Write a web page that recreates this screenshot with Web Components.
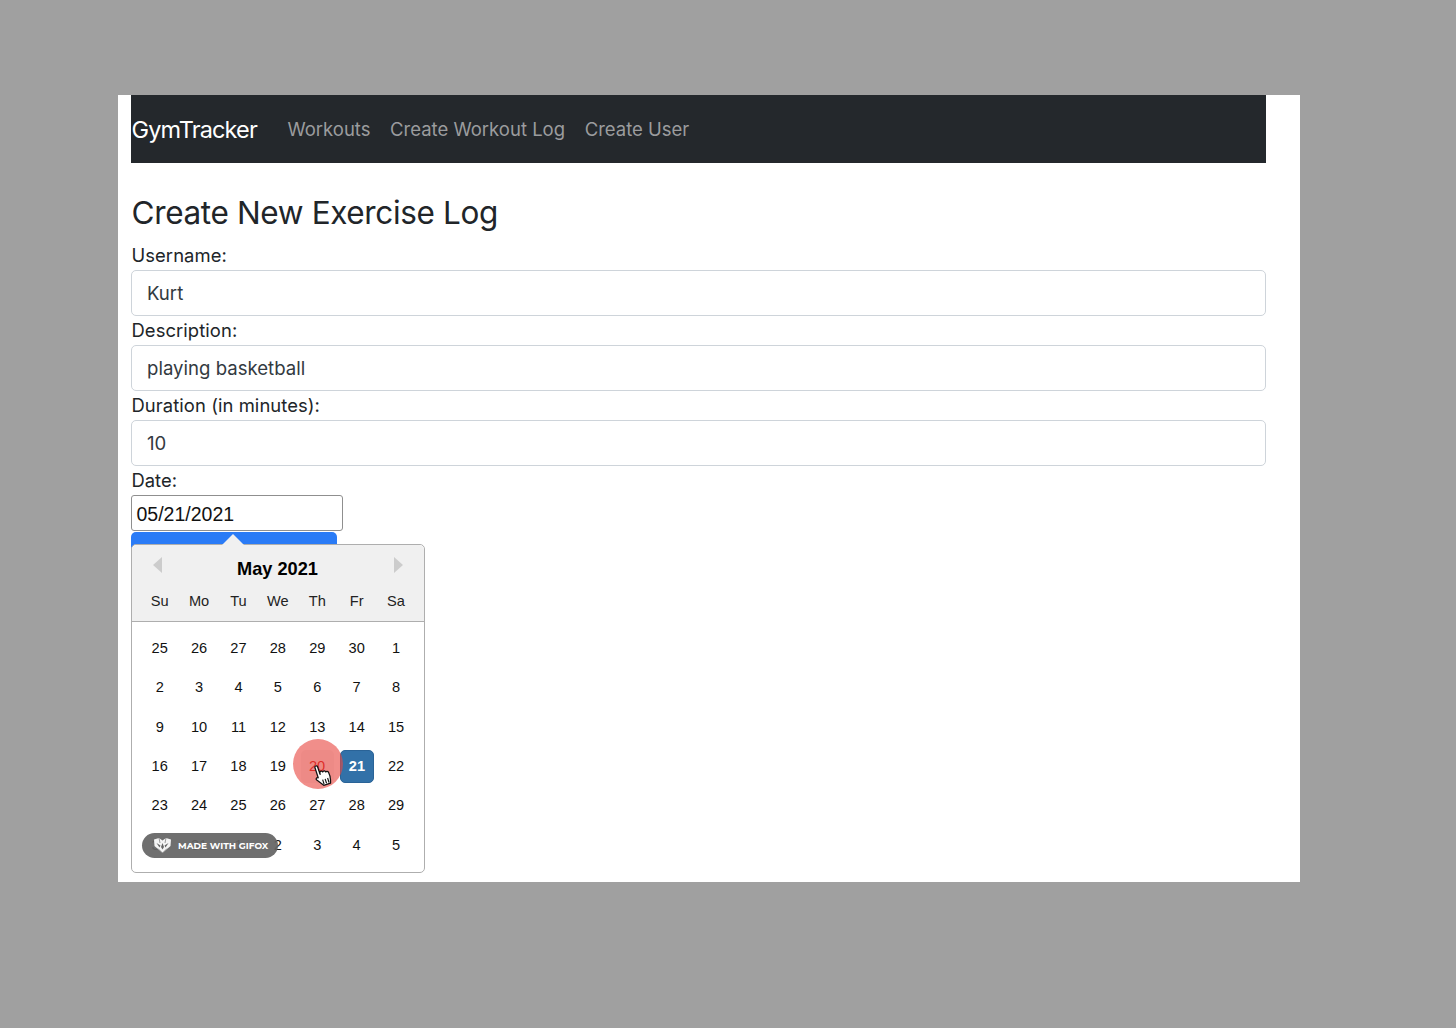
<!DOCTYPE html>
<html lang="en">
<head>
<meta charset="utf-8">
<title>GymTracker</title>
<style>
  html,body{margin:0;padding:0;height:100%;}
  body{background:#a0a0a0;font-family:Inter,"Liberation Sans",sans-serif;}
</style>
</head>
<body>
<gym-app>
  <gym-nav slot="nav" brand="GymTracker" links="Workouts|Create Workout Log|Create User"></gym-nav>
  <gym-field label="Username:" value="Kurt"></gym-field>
  <gym-field label="Description:" value="playing basketball"></gym-field>
  <gym-field label="Duration (in minutes):" value="10"></gym-field>
  <gym-date label="Date:" value="05/21/2021"></gym-date>
</gym-app>
<script>
class GymApp extends HTMLElement {
  constructor() {
    super();
    this.attachShadow({mode:'open'}).innerHTML = `
      <style>
        :host{display:block;padding:95px 156px 0 118px;}
        #panel{background:#fff;height:787px;padding:0 34px 0 13px;box-sizing:border-box;}
        h1{margin:0;padding:30.5px 0 0 .5px;height:78px;box-sizing:border-box;font:400 31.5px/38px Inter,"Liberation Sans",sans-serif;color:#212529;letter-spacing:-.36px;}
        #form{display:flex;flex-direction:column;}
      </style>
      <div id="panel">
        <slot name="nav"></slot>
        <h1>Create New Exercise Log</h1>
        <div id="form"><slot></slot></div>
      </div>`;
  }
}
customElements.define('gym-app', GymApp);

class GymNav extends HTMLElement {
  connectedCallback() {
    const links = this.getAttribute('links').split('|').map(l => `<a>${l}</a>`).join('');
    this.attachShadow({mode:'open'}).innerHTML = `
      <style>
        :host{display:flex;align-items:center;height:68px;padding-left:.5px;background:#24282c;font-family:Inter,"Liberation Sans",sans-serif;}
        b{font-weight:400;font-size:23.5px;color:#fff;margin-right:30.5px;letter-spacing:-.85px;position:relative;}
        nav{display:flex;gap:19.6px;position:relative;}
        a{font-size:18.5px;color:#9b9c9e;}
      </style>
      <b>${this.getAttribute('brand')}</b><nav>${links}</nav>`;
  }
}
customElements.define('gym-nav', GymNav);

class GymField extends HTMLElement {
  connectedCallback() {
    this.attachShadow({mode:'open'}).innerHTML = `
      <style>
        :host{display:block;height:75px;font-family:Inter,"Liberation Sans",sans-serif;color:#212529;}
        label{display:block;height:29px;padding-left:.5px;font-size:18.4px;line-height:29px;letter-spacing:.08px;}
        div{height:46px;box-sizing:border-box;border:1px solid #ced4da;border-radius:5px;padding:0 15px;font-size:18.6px;line-height:44px;color:#333a41;background:#fff;}
      </style>
      <label>${this.getAttribute('label')}</label><div>${this.getAttribute('value')}</div>`;
  }
}
customElements.define('gym-field', GymField);

class GymCalendar extends HTMLElement {
  connectedCallback() {
    const heads = ['Su','Mo','Tu','We','Th','Fr','Sa'].map(d => `<span>${d}</span>`).join('');
    const days = [25,26,27,28,29,30,1, 2,3,4,5,6,7,8, 9,10,11,12,13,14,15, 16,17,18,19,20,21,22, 23,24,25,26,27,28,29, 30,31,1,2,3,4,5];
    const cells = days.map((d, i) => {
      const cls = i === 26 ? 'sel' : i === 25 ? 'hover' : '';
      return `<span class="${cls}">${d}</span>`;
    }).join('');
    this.attachShadow({mode:'open'}).innerHTML = `
      <style>
        :host{display:block;position:absolute;left:0;top:78px;width:294px;height:329px;box-sizing:border-box;background:#fff;border:1px solid #aeaeae;border-radius:5px;font-family:"Liberation Sans",Arial,sans-serif;color:#000;}
        #tip{position:absolute;left:90px;top:-11px;width:0;height:0;border:11px solid transparent;border-top:0;border-bottom-color:#f0f0f0;}
        header{height:76px;background:#f0f0f0;border-bottom:1px solid #aeaeae;border-radius:5px 5px 0 0;position:relative;}
        #month{height:47px;padding-right:1px;text-align:center;font-weight:700;font-size:18.2px;line-height:48px;}
        .arrow{position:absolute;top:12px;width:0;height:0;border:8px solid transparent;}
        #prev{left:21px;border-left:0;border-right:9px solid #ccc;}
        #next{right:21px;border-right:0;border-left:9px solid #ccc;}
        .row{display:grid;grid-template-columns:repeat(7,39.4px);padding:0 8px;text-align:center;}
        #heads{font-size:14.6px;line-height:18px;color:#222;}
        #days{grid-auto-rows:39.3px;padding-top:7.2px;font-size:14.6px;line-height:39px;color:#111;}
        #days span{position:relative;}
        .sel,.hover{border-radius:5px;box-sizing:border-box;height:33px;margin:3px 0 0 3px;}
        .sel{width:34px;background:#3271a8;border:1px solid #2a6397;color:#fff;font-weight:700;line-height:31px;}
        .hover{width:33px;background:#f4f4f4;color:#c00;line-height:33px;}
      </style>
      <div id="tip"></div>
      <header>
        <div id="prev" class="arrow"></div><div id="next" class="arrow"></div>
        <div id="month">May 2021</div>
        <div id="heads" class="row">${heads}</div>
      </header>
      <div id="days" class="row">${cells}</div>
      <slot></slot>`;
  }
}
customElements.define('gym-calendar', GymCalendar);

class GifoxBadge extends HTMLElement {
  constructor() {
    super();
    this.attachShadow({mode:'open'}).innerHTML = `
      <style>
        :host{display:flex;align-items:center;gap:6px;position:absolute;left:10px;top:288px;width:136px;height:25px;box-sizing:border-box;padding:0 0 1px 11px;border-radius:13px;background:rgba(100,100,100,.93);color:#fff;font:700 9px Montserrat,"Open Sans",sans-serif;letter-spacing:.05px;white-space:nowrap;}
        svg{flex:none;}
      </style>
      <svg width="19" height="17" viewBox="0 0 19 17">
        <path d="M1 2.500 6 1 9.500 3.500 13 1 18 2.500 17.500 9 9.500 16 1.500 9Z" fill="#f4f4f4"/>
        <path d="M3.500 6 7.500 8.500 6.500 10.500ZM15.500 6 11.500 8.500 12.500 10.500ZM9.500 6 11 10 9.500 12.500 8 10Z" fill="#666"/>
        <path d="M6 1 7 6M13 1 12 6M5 11.500 9.500 16 14 11.500" fill="none" stroke="#777" stroke-width=".7"/>
      </svg>
      MADE WITH GIFOX`;
  }
}
customElements.define('gifox-badge', GifoxBadge);

class ClickPointer extends HTMLElement {
  constructor() {
    super();
    this.attachShadow({mode:'open'}).innerHTML = `
      <style>
        :host{display:block;position:absolute;left:161px;top:194px;width:50px;height:50px;border-radius:50%;background:rgba(232,72,66,.62);}
        svg{position:absolute;left:20px;top:24px;transform:rotate(-18deg);}
      </style>
      <svg width="21" height="25" viewBox="0 0 20 24">
        <path d="M4.500 2.200c0-1.500 2.600-1.500 2.700 0V10l.6-2.400c1.300-.8 2.500-.2 2.600 1l.2-.4c1.200-.6 2.300 0 2.400 1.200.9-.5 2.300-.1 2.500 1.200.4 2.500.2 5-.3 7.100l-1 3.300H7.300L2.500 14.200C1.700 13 2.600 11.600 4.500 12.500Z" fill="#fff" stroke="#111" stroke-width="1.200" stroke-linejoin="round"/>
        <path d="M8 15.500v4.500M10.500 15.500v4.500M13 15.500v4.500" stroke="#111" stroke-width="1.100"/>
      </svg>`;
  }
}
customElements.define('click-pointer', ClickPointer);

class GymDate extends HTMLElement {
  connectedCallback() {
    this.attachShadow({mode:'open'}).innerHTML = `
      <style>
        :host{display:block;position:relative;font-family:Inter,"Liberation Sans",sans-serif;color:#212529;}
        label{display:block;height:29px;padding-left:.5px;font-size:18.4px;line-height:29px;}
        #input{width:212px;height:36px;box-sizing:border-box;border:1px solid #8f8f8f;border-radius:3px;padding-left:4.5px;font:19.5px/36px "Liberation Sans",Arial,sans-serif;color:#111;background:#fff;}
        #submit{width:206px;height:20px;margin-top:1px;background:#2a7bf6;border-radius:5px 5px 0 0;}
      </style>
      <label>${this.getAttribute('label')}</label>
      <div id="input">${this.getAttribute('value')}</div>
      <div id="submit"></div>
      <gym-calendar></gym-calendar>`;
    const cal = this.shadowRoot.querySelector('gym-calendar');
    cal.append(document.createElement('click-pointer'), document.createElement('gifox-badge'));
  }
}
customElements.define('gym-date', GymDate);
</script>
</body>
</html>
